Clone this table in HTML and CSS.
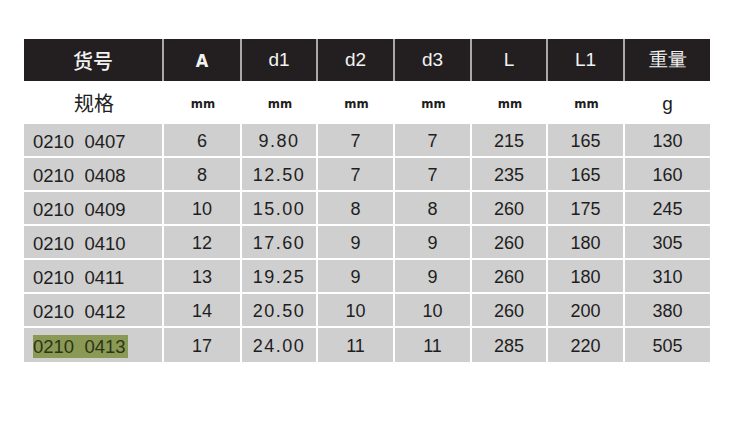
FILE: index.html
```html
<!DOCTYPE html>
<html>
<head>
<meta charset="utf-8">
<link rel="stylesheet" href="styles.css">
</head>
<body>
<div class="sheet">
  <div class="row head">
    <div class="c c1 cjk">货号</div>
    <div class="c">A</div>
    <div class="c">d1</div>
    <div class="c">d2</div>
    <div class="c">d3</div>
    <div class="c">L</div>
    <div class="c">L1</div>
    <div class="c c8 cjk">重量</div>
  </div>
  <div class="row unit">
    <div class="c c1 cjk">规格</div>
    <div class="c">mm</div>
    <div class="c">mm</div>
    <div class="c">mm</div>
    <div class="c">mm</div>
    <div class="c">mm</div>
    <div class="c">mm</div>
    <div class="c c8 g">g</div>
  </div>
  <div class="row data">
    <div class="c c1">0210  0407</div><div class="c">6</div><div class="c dec">9.80</div><div class="c">7</div><div class="c">7</div><div class="c">215</div><div class="c">165</div><div class="c c8">130</div>
  </div>
  <div class="row data">
    <div class="c c1">0210  0408</div><div class="c">8</div><div class="c dec">12.50</div><div class="c">7</div><div class="c">7</div><div class="c">235</div><div class="c">165</div><div class="c c8">160</div>
  </div>
  <div class="row data">
    <div class="c c1">0210  0409</div><div class="c">10</div><div class="c dec">15.00</div><div class="c">8</div><div class="c">8</div><div class="c">260</div><div class="c">175</div><div class="c c8">245</div>
  </div>
  <div class="row data">
    <div class="c c1">0210  0410</div><div class="c">12</div><div class="c dec">17.60</div><div class="c">9</div><div class="c">9</div><div class="c">260</div><div class="c">180</div><div class="c c8">305</div>
  </div>
  <div class="row data">
    <div class="c c1">0210  0411</div><div class="c">13</div><div class="c dec">19.25</div><div class="c">9</div><div class="c">9</div><div class="c">260</div><div class="c">180</div><div class="c c8">310</div>
  </div>
  <div class="row data">
    <div class="c c1">0210  0412</div><div class="c">14</div><div class="c dec">20.50</div><div class="c">10</div><div class="c">10</div><div class="c">260</div><div class="c">200</div><div class="c c8">380</div>
  </div>
  <div class="row data last">
    <div class="c c1"><span class="mark">0210  0413</span></div><div class="c">17</div><div class="c dec">24.00</div><div class="c">11</div><div class="c">11</div><div class="c">285</div><div class="c">220</div><div class="c c8">505</div>
  </div>
</div>
</body>
</html>
```

FILE: styles.css
```css
html, body {
  margin: 0;
  padding: 0;
  background: #ffffff;
}
body {
  font-family: "Liberation Sans", Arial, sans-serif;
  color: #1e1e1e;
}
.sheet {
  margin: 39px 0 0 24px;
  width: 686px;
  display: flex;
  flex-direction: column;
}
.row {
  display: flex;
  box-sizing: border-box;
}
.c {
  display: flex;
  align-items: center;
  justify-content: center;
  box-sizing: border-box;
  width: 77px;
  white-space: pre;
}
.row .c:nth-child(2) { width: 78px; }
.row .c:nth-child(3) { width: 76px; }
.row .c:nth-child(6) { width: 76px; }
.c1 { width: 140px; }
.c8 { width: 85px; }

.head {
  height: 42px;
  background: #231f20;
  color: #f2f2f2;
}
.head .c {
  border-right: 2px solid #a9a9a9;
  font-family: "DejaVu Sans Condensed", "DejaVu Sans", sans-serif;
  font-size: 18px;
  font-weight: bold;
}
.head .c:nth-child(n+3) {
  font-family: "Liberation Sans", Arial, sans-serif;
  font-weight: normal;
  font-size: 19px;
}
.head .c8 { border-right: none; }
.unit {
  height: 43px;
  background: #ffffff;
  color: #1e1e1e;
}
.unit .c {
  font-family: "DejaVu Sans Condensed", "DejaVu Sans", sans-serif;
  font-size: 13px;
  font-weight: bold;
  padding-top: 2px;
}
.head .cjk, .unit .cjk {
  font-family: "Noto Sans CJK SC", sans-serif;
  font-size: 20px;
  font-weight: 500;
  padding-top: 0;
}
.unit .cjk {
  font-weight: 400;
}
.unit .g {
  font-family: "Liberation Sans", Arial, sans-serif;
  font-weight: normal;
  font-size: 19px;
}
.data {
  height: 34px;
  background: #cfcfcf;
  border-bottom: 2px solid #ffffff;
  font-size: 18px;
  color: #1e1e1e;
}
.data.last { border-bottom: none; height: 34px; }
.data .c {
  border-right: 2px solid #ffffff;
  padding-top: 3px;
}
.data .c8 { border-right: none; }
.data .c1 {
  justify-content: flex-start;
  padding-left: 9px;
  font-size: 18.5px;
}
.dec { letter-spacing: 1.5px; }
.mark {
  background: #8a9a55;
  color: #2c3418;
  line-height: 23px;
  padding-right: 2px;
}
```
